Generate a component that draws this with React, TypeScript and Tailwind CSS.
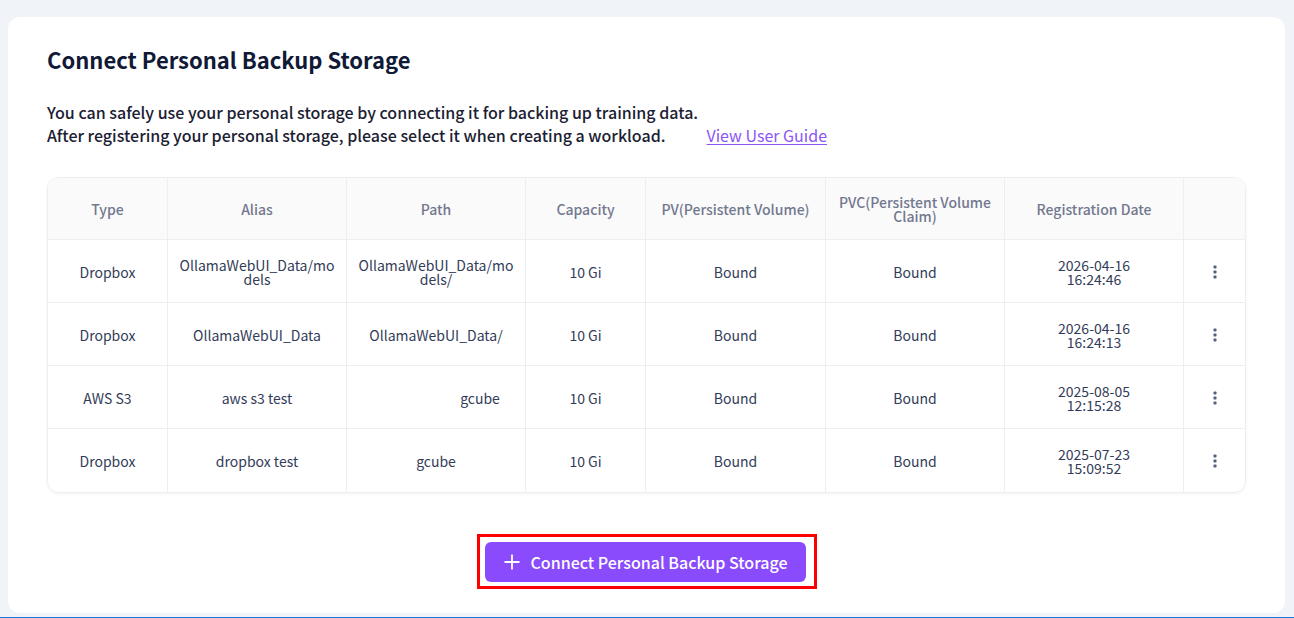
import React from "react";

const font = { fontFamily: '"Noto Sans CJK KR", "Noto Sans", sans-serif' };

type Row = {
  type: string;
  alias: string;
  path: React.ReactNode;
  cap: string;
  pv: string;
  pvc: string;
  date: string;
  time: string;
};

const rows: Row[] = [
  { type: "Dropbox", alias: "OllamaWebUI_Data/models", path: "OllamaWebUI_Data/models/", cap: "10 Gi", pv: "Bound", pvc: "Bound", date: "2026-04-16", time: "16:24:46" },
  { type: "Dropbox", alias: "OllamaWebUI_Data", path: "OllamaWebUI_Data/", cap: "10 Gi", pv: "Bound", pvc: "Bound", date: "2026-04-16", time: "16:24:13" },
  { type: "AWS S3", alias: "aws s3 test", path: <span className="inline-block pl-[88px]">gcube</span>, cap: "10 Gi", pv: "Bound", pvc: "Bound", date: "2025-08-05", time: "12:15:28" },
  { type: "Dropbox", alias: "dropbox test", path: "gcube", cap: "10 Gi", pv: "Bound", pvc: "Bound", date: "2025-07-23", time: "15:09:52" },
];

const cols = "grid grid-cols-[120px_179px_179px_120px_180px_179px_179px_1fr]";

function Dots() {
  return (
    <svg width="6" height="16" viewBox="0 0 6 16" fill="#56617e">
      <rect x="1.5" y="1.5" width="3" height="3" rx="0.8" />
      <rect x="1.5" y="6.5" width="3" height="3" rx="0.8" />
      <rect x="1.5" y="11.5" width="3" height="3" rx="0.8" />
    </svg>
  );
}

function Cell({ children, last }: { children?: React.ReactNode; last?: boolean }) {
  return (
    <div
      className={`flex items-center justify-center px-[11px] pt-[1px] text-center break-all leading-[14px] ${last ? "" : "border-r border-[#eeeeee]"}`}
    >
      {children}
    </div>
  );
}

export default function App() {
  return (
    <div style={font} className="w-[1294px] h-[618px] bg-[#f0f3f8] flex flex-col overflow-hidden">
      <div className="flex-1 flex flex-col pt-[17px] pl-[8px] pr-[9px] pb-[4px]">
        <div className="flex-1 bg-white rounded-[12px] px-[39px] pt-[27px] flex flex-col">
          <h1 className="text-[22px] font-bold text-[#101935] leading-[30px]">
            Connect Personal Backup Storage
          </h1>
          <div className="mt-[26px] text-[16px] text-[#1b2033] leading-[24px] font-medium">
            <p>You can safely use your personal storage by connecting it for backing up training data.</p>
            <p className="flex -mt-[1px]">
              <span>After registering your personal storage, please select it when creating a workload.</span>
              <a className="ml-[41px] text-[#8b55f6] underline underline-offset-2 cursor-pointer font-normal">View User Guide</a>
            </p>
          </div>

          <div className="mt-[30px] rounded-[12px] border border-[#eeeeee] shadow-[0_1px_3px_rgba(0,0,0,0.06)] overflow-hidden">
            <div className={`${cols} h-[62px] bg-[#fafafa] text-[14px] font-medium text-[#72788f] border-b border-[#eeeeee]`}>
              <Cell>Type</Cell>
              <Cell>Alias</Cell>
              <Cell>Path</Cell>
              <Cell>Capacity</Cell>
              <Cell>PV(Persistent Volume)</Cell>
              <Cell><span className="break-normal">PVC(Persistent Volume Claim)</span></Cell>
              <Cell>Registration Date</Cell>
              <Cell last />
            </div>
            {rows.map((r, i) => (
              <div
                key={i}
                className={`${cols} h-[63px] text-[14px] font-normal text-[#323c58] ${i < rows.length - 1 ? "border-b border-[#eeeeee]" : ""}`}
              >
                <Cell>{r.type}</Cell>
                <Cell>{r.alias}</Cell>
                <Cell>{r.path}</Cell>
                <Cell>{r.cap}</Cell>
                <Cell>{r.pv}</Cell>
                <Cell>{r.pvc}</Cell>
                <Cell>
                  <span>
                    {r.date}
                    <br />
                    {r.time}
                  </span>
                </Cell>
                <Cell last>
                  <Dots />
                </Cell>
              </div>
            ))}
          </div>

          <div className="mt-[41px] flex justify-center">
            <div className="border-[3px] border-[#ff0000] pl-[5px] pr-[8px] pt-[5px] pb-[4px] ml-[1px]">
              <button className="h-[40px] w-[321px] rounded-[6px] bg-[#8a4bfd] text-white text-[16px] font-medium flex items-center justify-center gap-[11px]">
                <svg width="16" height="16" viewBox="0 0 16 16" stroke="white" strokeWidth="1.8" fill="none">
                  <path d="M8 0.5V15.5M0.5 8H15.5" />
                </svg>
                <span>Connect Personal Backup Storage</span>
              </button>
            </div>
          </div>
        </div>
      </div>
      <div className="h-[1px] bg-[#1976d2]" />
    </div>
  );
}
